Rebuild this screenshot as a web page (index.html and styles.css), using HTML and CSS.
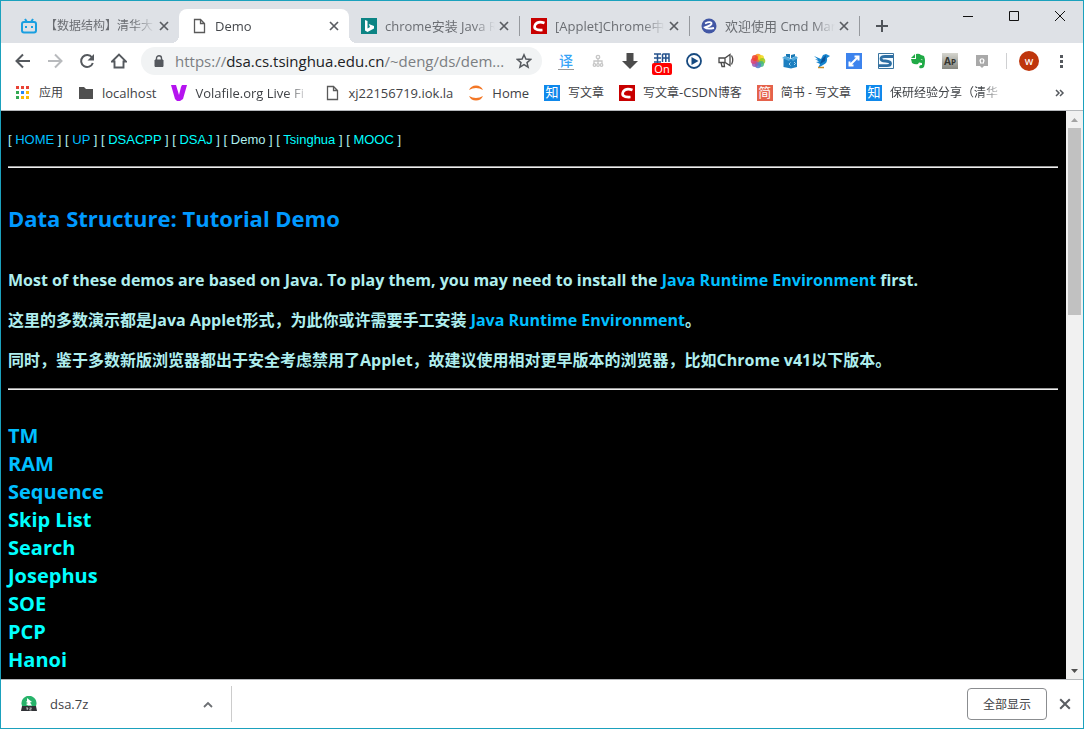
FILE: index.html
```html
<!DOCTYPE html>
<html lang="zh-CN">
<head>
<meta charset="utf-8">
<title>Demo</title>
<link rel="stylesheet" href="styles.css">
</head>
<body>
<div class="window">
  <header class="tabstrip">
    <div class="tabs">
      <div class="tab">
        <svg class="icon" viewBox="0 0 16 16"><path d="M4 1l2 3M12 1l-2 3" stroke="#1a9fe0" stroke-width="2"/><rect x="1" y="4" width="14" height="10.500" rx="2" fill="none" stroke="#1a9fe0" stroke-width="2"/><path d="M5 8v2M11 8v2" stroke="#1a9fe0" stroke-width="2"/></svg>
        <span class="tab-title tab-title-cjk">【数据结构】清华大</span>
        <button class="close" aria-label="关闭"><svg viewBox="0 0 10 10"><path d="M1 1l8 8M9 1L1 9"/></svg></button>
      </div>
      <div class="tab active">
        <svg class="icon" viewBox="0 0 16 16"><path d="M3.500 1.500h6l4 4v9h-10zM9.500 1.500v4h4" fill="none" stroke="#5a5a5a" stroke-width="1.300"/></svg>
        <span class="tab-title">Demo</span>
        <button class="close" aria-label="关闭"><svg viewBox="0 0 10 10"><path d="M1 1l8 8M9 1L1 9"/></svg></button>
      </div>
      <div class="tab divided">
        <svg class="icon" viewBox="0 0 16 16"><path d="M0 0h16v16H0z" fill="#0c8484"/><path d="M4 2l2.500 1v7.500L9 9 7.700 6 13 8v2.500L6.500 14 4 12.500z" fill="#fff"/></svg>
        <span class="tab-title">chrome安装 Java R</span>
        <button class="close" aria-label="关闭"><svg viewBox="0 0 10 10"><path d="M1 1l8 8M9 1L1 9"/></svg></button>
      </div>
      <div class="tab divided">
        <svg class="icon" viewBox="0 0 16 16"><path d="M0 0h16v16H0z" fill="#c80000"/><path d="M13.500 5Q7 2.500 4.300 6.500C2.500 10 4 12.500 11.500 12" fill="none" stroke="#fff" stroke-width="2.700"/></svg>
        <span class="tab-title">[Applet]Chrome中</span>
        <button class="close" aria-label="关闭"><svg viewBox="0 0 10 10"><path d="M1 1l8 8M9 1L1 9"/></svg></button>
      </div>
      <div class="tab divided">
        <svg class="icon" viewBox="0 0 16 16"><circle cx="8" cy="8" r="7.500" fill="#4257a5"/><path d="M4 5.500q5-2.500 6.500-.5Q11.500 7 4 9.500q2 2 9 .5" fill="none" stroke="#fff" stroke-width="1.900"/></svg>
        <span class="tab-title">欢迎使用 Cmd Mar</span>
        <button class="close" aria-label="关闭"><svg viewBox="0 0 10 10"><path d="M1 1l8 8M9 1L1 9"/></svg></button>
      </div>
    </div>
    <button class="new-tab" aria-label="新标签页"><svg viewBox="0 0 12 12"><path d="M6 0v12M0 6h12" stroke="#50545a" stroke-width="2"/></svg></button>
    <div class="window-buttons">
      <button aria-label="最小化"><svg viewBox="0 0 10 10"><path d="M0 5.500h10"/></svg></button>
      <button aria-label="最大化"><svg viewBox="0 0 10 10"><path d="M.5.500h9v9h-9z"/></svg></button>
      <button aria-label="关闭窗口"><svg viewBox="0 0 10 10"><path d="M0 0l10 10M10 0L0 10"/></svg></button>
    </div>
  </header>

  <div class="toolbar">
    <div class="navigation">
      <button aria-label="后退"><svg class="icon" viewBox="0 0 16 16"><path d="M15 8H2M8 1.500L1.500 8 8 14.500" fill="none" stroke="#55595e" stroke-width="2"/></svg></button>
      <button aria-label="前进"><svg class="icon" viewBox="0 0 16 16"><path d="M1 8h13M8 1.500L14.500 8 8 14.500" fill="none" stroke="#b8babd" stroke-width="2"/></svg></button>
      <button aria-label="刷新"><svg class="icon" viewBox="0 0 16 16"><path d="M13 4.500a6 6 0 1 0 .8 5.500" fill="none" stroke="#55595e" stroke-width="2"/><path d="M15 1v6.500H8.500z" fill="#55595e"/></svg></button>
      <button aria-label="主页"><svg class="icon" viewBox="0 0 16 16"><path d="M1 8.500L8 1.500l7 7h-2.500v6h-9v-6z" fill="none" stroke="#55595e" stroke-width="1.900"/></svg></button>
    </div>
    <div class="omnibox">
      <svg class="lock" viewBox="0 0 10 12"><path d="M1 5h8v6.500H1z" fill="#55595e" stroke="#55595e"/><path d="M2.500 5V3.200a2.500 2.500 0 0 1 5 0V5" fill="none" stroke="#55595e" stroke-width="1.400"/></svg>
      <span class="url">https://<b>dsa.cs.tsinghua.edu.cn</b>/~deng/ds/dem...</span>
      <button aria-label="收藏"><svg class="icon" viewBox="0 0 16 16"><path d="M8 1.800l1.900 4.300 4.700.4L11 9.600l1.100 4.600L8 11.700l-4.100 2.500L5 9.600 1.400 6.500l4.700-.4z" fill="none" stroke="#55595e" stroke-width="1.500"/></svg></button>
    </div>
    <div class="extensions">
      <button class="translate" aria-label="翻译">译</button>
      <button aria-label="站点地图"><svg class="icon" viewBox="0 0 16 16"><g fill="none" stroke="#c6c6c6" stroke-width="1.300"><circle cx="8" cy="4" r="1.700"/><path d="M8 6v5M4 11V8h8v3"/><circle cx="4.500" cy="12" r="1.300"/><circle cx="8" cy="12" r="1.300"/><circle cx="11.500" cy="12" r="1.300"/></g></svg></button>
      <button aria-label="下载"><svg class="icon" viewBox="0 0 16 16"><path d="M4.500 0h7v8H16l-8 8-8-8h4.500z" fill="#4c4c4c"/></svg></button>
      <button class="toggle" aria-label="脚本">
        <svg class="icon" viewBox="0 0 16 16"><path d="M0 1h7M0 5h7M3.500 1v9M0 9h7M8.500 1h6.500v8M8.500 1v8M11.800 1v8M8 5h7" fill="none" stroke="#24518c" stroke-width="1.500"/></svg>
        <span class="badge">On</span>
      </button>
      <button aria-label="播放"><svg class="icon" viewBox="0 0 16 16"><circle cx="8" cy="8" r="7" fill="#fff" stroke="#174a80" stroke-width="1.800"/><path d="M5.500 4l7 4-7 4z" fill="#174a80"/></svg></button>
      <button aria-label="公告"><svg class="icon" viewBox="0 0 16 16"><path d="M1 5h6l5-3.500v11L7 9.500H1zM3 9.500l1 4h2.500l-.5-4M7 5v4.500M13.500 2.500q2.500 4.500 0 9" fill="none" stroke="#4a4a4a" stroke-width="1.300"/></svg></button>
      <button aria-label="相册"><svg class="icon" viewBox="0 0 16 16"><circle cx="8" cy="8" r="4.500" fill="#d97a48"/><g fill-opacity=".88"><circle cx="8" cy="3.700" r="3" fill="#f8961c"/><circle cx="11.100" cy="4.900" r="3" fill="#f0d820"/><circle cx="12.300" cy="8" r="3" fill="#9bc924"/><circle cx="11.100" cy="11.100" r="3" fill="#42b688"/><circle cx="8" cy="12.300" r="3" fill="#5280cc"/><circle cx="4.900" cy="11.100" r="3" fill="#965bb7"/><circle cx="3.700" cy="8" r="3" fill="#db477b"/><circle cx="4.900" cy="4.900" r="3" fill="#ef4430"/></g></svg></button>
      <button aria-label="代码盒"><svg class="icon" viewBox="0 0 16 16"><path d="M1.500 6H15v8l-6 1.500L1.500 14z" fill="#1d7fc0"/><path d="M0 5l3-2 6 3-2 2zM16 5l-2-2-5 3 2 2z" fill="#51a9dc"/><path d="M4 1h4v4L4 3.500zM9 2l4-1v2.500L9 5.500z" fill="#1878b5"/><path d="M8.500 9.500L7 11l1.500 1.500M12 9l1.500 1.500L12 12" fill="none" stroke="#a9d5ef"/></svg></button>
      <button aria-label="迅雷"><svg class="icon" viewBox="0 0 16 16"><path d="M0 3l7 3 2-4 3-1 4 2-3 2q1 5-4 7l-5 3 2-4-4-2 3-.5L1 6l3 .5z" fill="#1685cf"/><path d="M8 6l4-4-1 6-5 3z" fill="#0a549b"/><path d="M4 14.500h6" stroke="#c98d25" stroke-width="1.500"/></svg></button>
      <button aria-label="缩放"><svg class="icon" viewBox="0 0 16 16"><path d="M0 0h16v16H0z" fill="#3d83ed"/><path d="M4 12l8-8M8.500 3.500h4v4M3.500 8.500v4h4" fill="none" stroke="#fff" stroke-width="2"/></svg></button>
      <button aria-label="Stylish"><svg class="icon" viewBox="0 0 16 16"><path d="M.5.500h15v15H.5z" fill="#f5fbff" stroke="#39739e"/><path d="M15 3.500H7Q3 3.500 3 5.700T7.500 8q5 .3 5 2.500T9 12.700H1" fill="none" stroke="#2d6ea3" stroke-width="2.800"/></svg></button>
      <button aria-label="Evernote"><svg class="icon" viewBox="0 0 16 16"><path d="M1 5L5 1v4zM6 1q3-1 5 1l3 1q2 5 0 11-2 2-4.500 1-1-2 1.500-3h1v-2l-3-.5L8 11q-3 1-6-1L1 6h5z" fill="#20aa46"/><path d="M10.500 6.500q2-1 2 .8z" fill="#fff"/></svg></button>
      <button class="ap" aria-label="AP">A<small>P</small></button>
      <button aria-label="消息"><svg class="icon" viewBox="0 0 16 16"><path d="M2 2h12v11h-4L8 15l-2-2H2z" fill="#a9a9a9"/><path d="M6 10h1.200q-2-2.500-.5-3.800 1.300-.9 2.600 0 1.500 1.300-.5 3.800H10" fill="none" stroke="#fff" stroke-width="1.200"/></svg></button>
    </div>
    <button class="avatar" aria-label="用户">W</button>
    <button class="menu" aria-label="菜单"><svg class="icon" viewBox="0 0 16 16"><path d="M7 2h3v3H7zM7 7h3v3H7zM7 12h3v3H7z" fill="#55595e"/></svg></button>
  </div>

  <nav class="bookmarks" aria-label="书签">
    <a href="#"><svg class="icon" viewBox="0 0 16 16"><path d="M1 1h3v3H1zM6 1h3v3H6zM11 1h3v3h-3z" fill="#e94235"/><path d="M1 6h3v3H1zM1 11h3v3H1z" fill="#34a853"/><path d="M6 6h3v3H6z" fill="#2685f5"/><path d="M11 6h3v3h-3zM6 11h3v3H6zM11 11h3v3h-3z" fill="#fab905"/></svg><span>应用</span></a>
    <a href="#"><svg class="icon" viewBox="0 0 16 16"><path d="M1 2h5l2 2h7v10H1z" fill="#505050"/></svg><span class="latin">localhost</span></a>
    <a href="#"><svg class="icon" viewBox="0 0 16 16"><path d="M0 0h5l3 10 2-8 1-2h5l-4 14-3 2H6l-2-2z" fill="#b514ef"/></svg><span class="latin clipped">Volafile.org Live Fi</span></a>
    <a href="#"><svg class="icon" viewBox="0 0 16 16"><path d="M3.500 1.500h6l4 4v9h-10zM9.500 1.500v4h4" fill="none" stroke="#5a5a5a" stroke-width="1.300"/></svg><span class="latin">xj22156719.iok.la</span></a>
    <a href="#"><svg class="icon" viewBox="0 0 16 16"><path d="M1 5Q3 .5 8 .5T15 5q-7-4-14 0zM1 11q2 4.500 7 4.500t7-4.500q-7 4-14 0z" fill="#f37726"/></svg><span class="latin">Home</span></a>
    <a href="#"><i class="glyph zhihu">知</i><span>写文章</span></a>
    <a href="#"><svg class="icon" viewBox="0 0 16 16"><path d="M0 0h16v16H0z" fill="#c80000"/><path d="M13.500 5Q7 2.500 4.300 6.500C2.500 10 4 12.500 11.500 12" fill="none" stroke="#fff" stroke-width="2.700"/></svg><span>写文章<span class="latin">-CSDN</span>博客</span></a>
    <a href="#"><i class="glyph jianshu">简</i><span>简书 - 写文章</span></a>
    <a href="#"><i class="glyph zhihu">知</i><span class="clipped">保研经验分享（清华</span></a>
    <button class="more" aria-label="更多书签"><svg viewBox="0 0 10 8"><path d="M1 1l3 3-3 3M5 1l3 3-3 3" fill="none" stroke="#55595e" stroke-width="1.500"/></svg></button>
  </nav>

  <div class="viewport">
    <main class="page">
      <nav class="site-nav">[ <a class="visited" href="#">HOME</a> ] [ <a class="visited" href="#">UP</a> ] [ <a href="#">DSACPP</a> ] [ <a href="#">DSAJ</a> ] [ Demo ] [ <a href="#">Tsinghua</a> ] [ <a href="#">MOOC</a> ]</nav>
      <hr>
      <h1>Data Structure: Tutorial Demo</h1>
      <p>Most of these demos are based on Java. To play them, you may need to install the <a class="visited" href="#">Java Runtime Environment</a> first.</p>
      <p>这里的多数演示都是Java Applet形式，为此你或许需要手工安装 <a class="visited" href="#">Java Runtime Environment</a>。</p>
      <p>同时，鉴于多数新版浏览器都出于安全考虑禁用了Applet，故建议使用相对更早版本的浏览器，比如Chrome v41以下版本。</p>
      <hr>
      <ul class="demos">
        <li><a class="visited" href="#">TM</a></li>
        <li><a class="visited" href="#">RAM</a></li>
        <li><a class="visited" href="#">Sequence</a></li>
        <li><a href="#">Skip List</a></li>
        <li><a href="#">Search</a></li>
        <li><a href="#">Josephus</a></li>
        <li><a href="#">SOE</a></li>
        <li><a href="#">PCP</a></li>
        <li><a href="#">Hanoi</a></li>
      </ul>
    </main>
    <div class="scrollbar">
      <button aria-label="向上滚动"><svg viewBox="0 0 7 4"><path d="M0 4l3.500-4L7 4z" fill="#a3a3a3"/></svg></button>
      <div class="track"><div class="thumb"></div></div>
      <button aria-label="向下滚动"><svg viewBox="0 0 7 4"><path d="M0 0h7L3.500 4z" fill="#505050"/></svg></button>
    </div>
  </div>

  <footer class="downloads">
    <div class="download">
      <svg class="icon" viewBox="0 0 16 16"><path d="M1 10a7.500 7.500 0 1 1 14 0z" fill="#27b36a"/><path d="M1 10h14l1 5H0z" fill="#303236"/><path d="M6 2l5 4-2 .5 2 3H7L5 8l2-1-2-1 1-1z" fill="#fff"/><path d="M5 12h2l-1 2M8.500 12h2l-2 2h2" fill="none" stroke="#ddd" stroke-width=".8"/></svg>
      <span class="file">dsa.7z</span>
      <button aria-label="下载选项"><svg viewBox="0 0 10 7"><path d="M1 6l4-4 4 4" fill="none" stroke="#6c6f73" stroke-width="1.800"/></svg></button>
    </div>
    <button class="show-all">全部显示</button>
    <button class="close large" aria-label="关闭下载栏"><svg viewBox="0 0 10 10"><path d="M1 1l8 8M9 1L1 9"/></svg></button>
  </footer>
</div>
</body>
</html>
```
FILE: styles.css
```css
* { box-sizing: border-box; }

body {
  margin: 0;
  font-family: "Open Sans", "Noto Sans CJK SC", sans-serif;
  font-size: 12px;
  color: #3f4246;
}

button {
  display: flex;
  align-items: center;
  justify-content: center;
  flex: none;
  margin: 0;
  padding: 0;
  border: 0;
  background: none;
  font: inherit;
  color: inherit;
}

a { text-decoration: none; color: inherit; }

.icon { display: block; flex: none; width: 16px; height: 16px; }

.window {
  display: flex;
  flex-direction: column;
  height: 100vh;
  overflow: hidden;
  border: 1px solid #1ba1bd;
  background: #fff;
}

/* Tabs */
.tabstrip {
  display: flex;
  flex: none;
  height: 42px;
  padding-left: 8px;
  background: #dee1e6;
}
.tabs { display: flex; flex: 0 1 850px; min-width: 0; padding-top: 8px; }
.tab {
  position: relative;
  display: flex;
  align-items: center;
  flex: 1 1 170px;
  min-width: 0;
  padding: 0 10px 0 12px;
  color: #6b6e73;
}
.tab-title {
  flex: 1;
  min-width: 0;
  margin: 0 4px 0 8px;
  overflow: hidden;
  white-space: nowrap;
  font-size: 13px;
  line-height: 20px;
  mask-image: linear-gradient(to right, #000 80%, transparent);
}
.tab-title-cjk { font-size: 12px; }
.active { background: #fff; border-radius: 8px 8px 0 0; color: #45484c; }
.active::before, .active::after {
  content: "";
  position: absolute;
  bottom: 0;
  width: 8px;
  height: 8px;
}
.active::before { right: 100%; background: radial-gradient(circle at 0 0, transparent 8px, #fff 8px); }
.active::after { left: 100%; background: radial-gradient(circle at 100% 0, transparent 8px, #fff 8px); }
.divided::after {
  content: "";
  position: absolute;
  right: -1px;
  top: 7px;
  width: 1px;
  height: 20px;
  background: #96999e;
}
.close svg { width: 10px; height: 10px; }
.close path { fill: none; stroke: #5a5d62; stroke-width: 1.7; }
.close.large svg { width: 12px; height: 12px; }
.new-tab { width: 46px; height: 34px; margin-top: 8px; }
.new-tab svg { width: 12px; height: 12px; }
.window-buttons { display: flex; margin-left: auto; height: 29px; }
.window-buttons button { width: 46px; }
.window-buttons svg { width: 10px; height: 10px; overflow: visible; }
.window-buttons path { fill: none; stroke: #111; }

/* Toolbar */
.toolbar {
  display: flex;
  align-items: center;
  flex: none;
  height: 36px;
  padding: 0 10px 0 6px;
}
.navigation, .extensions { display: flex; flex: none; }
.navigation button, .extensions button { width: 32px; height: 28px; }
.omnibox {
  display: flex;
  align-items: center;
  flex: 1;
  min-width: 0;
  height: 28px;
  margin: 0 8px 0 6px;
  padding: 0 10px 0 13px;
  border-radius: 14px;
  background: #f1f3f4;
}
.lock { flex: none; width: 10px; height: 12px; }
.url {
  flex: 1;
  min-width: 0;
  margin-left: 11px;
  overflow: hidden;
  white-space: nowrap;
  font-size: 15px;
  line-height: 24px;
  color: #7b7e82;
}
.url b { font-weight: 400; color: #202124; }
.extensions .translate {
  width: 16px;
  height: 18px;
  margin: 5px 8px;
  border-bottom: 1px solid #999;
  font-size: 14px;
  font-weight: 500;
  line-height: 16px;
  color: #36a3f7;
}
.toggle { position: relative; }
.badge {
  position: absolute;
  left: 6px;
  bottom: 0;
  width: 20px;
  border-radius: 2px;
  background: #f00;
  color: #fff;
  font-size: 11px;
  line-height: 12px;
}
.extensions .ap {
  width: 16px;
  height: 16px;
  margin: 6px 8px;
  background: linear-gradient(#d6d6cf, #85867f);
  color: #34352f;
  font-size: 10px;
  font-weight: 700;
}
.ap small { font-size: 8px; }
.avatar {
  position: relative;
  width: 20px;
  height: 20px;
  margin-left: 21px;
  border-radius: 50%;
  background: #bf360c;
  color: #fff;
  font-size: 9px;
  font-weight: 600;
}
.avatar::before {
  content: "";
  position: absolute;
  right: 32px;
  width: 1px;
  height: 16px;
  background: #cfd0d2;
}
.menu { width: 24px; height: 28px; margin-left: 10px; }

/* Bookmarks */
.bookmarks {
  display: flex;
  align-items: center;
  flex: none;
  gap: 15px;
  height: 32px;
  padding: 0 18px 4px 14px;
  border-bottom: 1px solid #b5b8bb;
}
.bookmarks a { display: flex; align-items: center; flex: none; gap: 8px; white-space: nowrap; line-height: 18px; }
.latin { font-size: 13px; }
.clipped {
  width: 114px;
  overflow: hidden;
  mask-image: linear-gradient(to right, #000 80%, transparent);
}
.glyph {
  width: 16px;
  height: 16px;
  color: #fff;
  font-size: 13px;
  font-style: normal;
  line-height: 15px;
  text-align: center;
}
.zhihu { background: #0f88eb; }
.jianshu { background: #e5624b; }
.more { margin-left: auto; }
.more svg { width: 10px; height: 8px; }

/* Page */
.viewport { display: flex; flex: 1; min-height: 0; background: #000; }
.page {
  flex: 1;
  min-width: 0;
  overflow: hidden;
  padding: 20px 8px 0 7px;
  color: #afeeee;
}
.page a { color: #0ff; }
.page a.visited { color: #00bfff; }
.site-nav { font: 13px/18px "Liberation Sans", Arial, sans-serif; }
.page hr { height: 2px; margin: 17px 0 0; border: 0; border-top: 1px solid #9a9a9a; background: #eee; }
.page h1 {
  margin: 34px 0 34px;
  font-size: 22px;
  font-weight: 700;
  line-height: 32px;
  color: #09f;
}
.page p { margin: 0 0 16px; font-size: 16px; font-weight: 700; line-height: 24px; }
.page p + hr { margin-top: 0; }
.demos { margin: 32px 0 0; padding: 0; list-style: none; font-size: 20px; font-weight: 700; line-height: 28px; }

.scrollbar { display: flex; flex-direction: column; flex: none; width: 17px; background: #f1f1f1; }
.scrollbar button { height: 17px; }
.scrollbar svg { width: 7px; height: 4px; }
.track { flex: 1; padding: 0 2px; }
.thumb { height: 35%; background: #c1c1c1; }

/* Downloads */
.downloads {
  display: flex;
  align-items: center;
  flex: none;
  height: 49px;
  padding-right: 12px;
  border-top: 1px solid #b5b8bb;
}
.download {
  display: flex;
  align-items: center;
  width: 231px;
  height: 36px;
  padding: 0 18px 0 20px;
  border-right: 1px solid #ccc;
}
.file { flex: 1; margin-left: 13px; font-size: 13px; }
.download button svg { width: 10px; height: 7px; }
.show-all {
  width: 80px;
  height: 32px;
  margin: 0 12px 0 auto;
  border: 1px solid #8b8d90;
  border-radius: 4px;
}
```
